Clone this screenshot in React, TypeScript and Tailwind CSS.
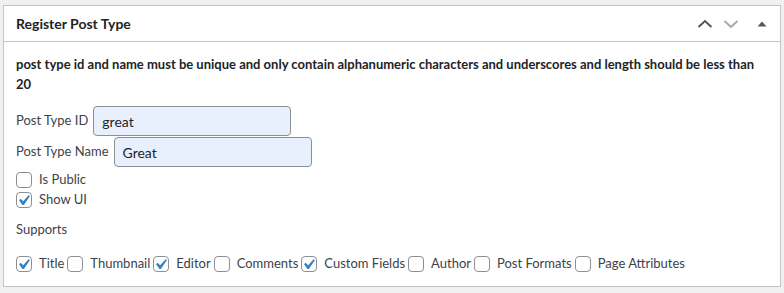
import React, { useState } from "react";

const SUPPORTS = [
  { key: "title", label: "Title", checked: true },
  { key: "thumbnail", label: "Thumbnail", checked: false },
  { key: "editor", label: "Editor", checked: true },
  { key: "comments", label: "Comments", checked: false },
  { key: "custom-fields", label: "Custom Fields", checked: true },
  { key: "author", label: "Author", checked: false },
  { key: "post-formats", label: "Post Formats", checked: false },
  { key: "page-attributes", label: "Page Attributes", checked: false },
];

const Checkbox = ({ checked, onChange }: { checked: boolean; onChange: () => void }) => (
  <span
    onClick={onChange}
    className="relative inline-block w-4 h-4 shrink-0 rounded-[4px] border border-[#8c8f94] bg-white cursor-pointer"
  >
    {checked && (
      <svg
        viewBox="0 0 20 20"
        className="absolute w-[21px] h-[21px] -left-[4px] -top-[3px]"
      >
        <path
          d="M14.83 4.89l1.34.94-5.81 8.38H9.02L5.78 9.67l1.34-1.25 2.57 2.4z"
          fill="#3582c4"
        />
      </svg>
    )}
  </span>
);

export default function App() {
  const [postTypeId, setPostTypeId] = useState("great");
  const [postTypeName, setPostTypeName] = useState("Great");
  const [isPublic, setIsPublic] = useState(false);
  const [showUi, setShowUi] = useState(true);
  const [supports, setSupports] = useState<Record<string, boolean>>(
    Object.fromEntries(SUPPORTS.map((s) => [s.key, s.checked]))
  );

  const toggleSupport = (key: string) =>
    setSupports((prev) => ({ ...prev, [key]: !prev[key] }));

  return (
    <div className="w-[784px] h-[293px] bg-[#f0f0f1] pt-[5px] pl-[3px] pr-[3px] font-['Lato',sans-serif] text-[13px] text-[#3c434a]">
      <div className="w-[778px] h-[282px] bg-white border border-[#c3c4c7]">
        {/* header */}
        <div className="flex items-center h-9 border-b border-[#c3c4c7]">
          <h2 className="flex-1 pl-3 text-[14px] font-bold text-[#1d2327]">
            Register Post Type
          </h2>
          <button className="w-[26px] h-9 flex items-center justify-center">
            <svg width="16" height="10" viewBox="0 0 16 10">
              <path d="M1.5 8 8 2l6.5 6" fill="none" stroke="#50575e" strokeWidth="2" />
            </svg>
          </button>
          <button className="w-[26px] h-9 flex items-center justify-center">
            <svg width="16" height="10" viewBox="0 0 16 10">
              <path d="M1.5 2 8 8l6.5-6" fill="none" stroke="#a7aaad" strokeWidth="2" />
            </svg>
          </button>
          <button className="w-9 h-9 flex items-center justify-center">
            <svg width="10" height="6" viewBox="0 0 10 6">
              <path d="M0.5 5.5 5 0.5l4.5 5z" fill="#50575e" />
            </svg>
          </button>
        </div>

        {/* body */}
        <div className="px-3">
          <p className="mt-3 font-bold text-[#1d2327] leading-5 max-w-[745px]">
            post type id and name must be unique and only contain alphanumeric characters and underscores and length should be less than 20
          </p>

          <div className="mt-3 flex flex-col gap-px">
            <div className="flex items-center gap-[5px]">
              <label>Post Type ID</label>
              <input
                value={postTypeId}
                onChange={(e) => setPostTypeId(e.target.value)}
                className="w-[198px] h-[30px] px-2 rounded-[4px] border border-[#8c8f94] bg-[#e8f0fe] text-[14px] text-[#1d2327] outline-none"
              />
            </div>
            <div className="flex items-center gap-[5px]">
              <label>Post Type Name</label>
              <input
                value={postTypeName}
                onChange={(e) => setPostTypeName(e.target.value)}
                className="w-[198px] h-[30px] px-2 rounded-[4px] border border-[#8c8f94] bg-[#e8f0fe] text-[14px] text-[#1d2327] outline-none"
              />
            </div>
          </div>

          <div className="mt-[3px] flex flex-col">
            <div className="flex items-center h-5">
              <Checkbox checked={isPublic} onChange={() => setIsPublic(!isPublic)} />
              <span className="ml-[7px]">Is Public</span>
            </div>
            <div className="flex items-center h-5">
              <Checkbox checked={showUi} onChange={() => setShowUi(!showUi)} />
              <span className="ml-[7px]">Show UI</span>
            </div>
          </div>

          <div className="mt-[10px] h-5 flex items-center">Supports</div>

          <div className="mt-[14px] flex items-center gap-[3px] h-5">
            {SUPPORTS.map((s) => (
              <div key={s.key} className="flex items-center">
                <Checkbox checked={supports[s.key]} onChange={() => toggleSupport(s.key)} />
                <span className="ml-[7px]">{s.label}</span>
              </div>
            ))}
          </div>
        </div>
      </div>
    </div>
  );
}
